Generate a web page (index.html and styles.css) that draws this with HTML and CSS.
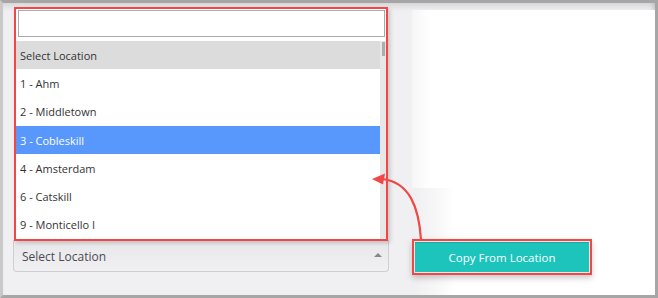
FILE: index.html
```html
<!DOCTYPE html>
<html lang="en">
<head>
    <meta charset="UTF-8">
    <meta name="viewport" content="width=device-width, initial-scale=1.0">
    <title>Copy From Location</title>
    <link rel="stylesheet" href="styles.css">
</head>
<body>
    <div class="frame">
        <div class="left-col">
            <div class="dropdown">
                <input type="text" class="search" aria-label="Search location">
                <div class="list-wrap">
                    <ul class="options">
                        <li class="option placeholder">Select Location</li>
                        <li class="option">1 - Ahm</li>
                        <li class="option">2 - Middletown</li>
                        <li class="option active">3 - Cobleskill</li>
                        <li class="option">4 - Amsterdam</li>
                        <li class="option">6 - Catskill</li>
                        <li class="option">9 - Monticello I</li>
                    </ul>
                    <div class="scrollbar"><div class="thumb"></div></div>
                </div>
            </div>
            <div class="select-box">
                <span>Select Location</span>
                <span class="caret"></span>
            </div>
        </div>

        <div class="right-col">
            <div class="panel"></div>
            <div class="lower">
                <div class="highlight">
                    <button type="button" class="copy-btn">Copy From Location</button>
                </div>
            </div>
        </div>

        <!-- annotation arrow -->
        <svg class="arrow" width="658" height="298" viewBox="0 0 658 298">
            <path d="M421 240 C419 208 410 182 382 179" fill="none" stroke="#f24747" stroke-width="2.2"/>
            <polygon points="372,179 385,173.5 383,184.5" fill="#f24747"/>
        </svg>
    </div>
</body>
</html>
```

FILE: styles.css
```css
        body {
            margin: 0;
            padding: 0;
            font-family: "Open Sans", Arial, sans-serif;
            background-color: #fff;
        }
        .frame {
            position: relative;
            width: 658px;
            height: 298px;
            box-sizing: border-box;
            border: 3px solid #a6a6a6;
            border-left-color: #c9c9c9;
            padding: 4px 0 0 10px;
            display: flex;
            background-color: #f0f0f2;
            box-shadow: inset 0 7px 6px -4px rgba(0, 0, 0, 0.12), inset -6px 0 5px -4px rgba(0, 0, 0, 0.14);
        }
        .left-col {
            width: 376px;
            display: flex;
            flex-direction: column;
        }
        .dropdown {
            position: relative;
            z-index: 2;
            margin: 0 1px;
            height: 234px;
            box-sizing: border-box;
            border: 2px solid #f24747;
            background-color: #fff;
            padding: 1px 1px 0 2px;
            box-shadow: 2px 2px 4px rgba(0, 0, 0, 0.18);
        }
        .search {
            display: block;
            width: 100%;
            height: 27px;
            box-sizing: border-box;
            border: 1px solid #aaa;
            margin: 0;
            padding: 0 4px;
            outline: none;
        }
        .list-wrap {
            display: flex;
            margin: 4px -1px 0 -2px;
            height: 198px;
            overflow: hidden;
        }
        .options {
            flex: 1;
            list-style: none;
            margin: 0;
            padding: 0;
        }
        .option {
            height: 28.3px;
            display: flex;
            align-items: center;
            padding-left: 4px;
            font-size: 11px;
            color: #333;
        }
        .option.placeholder {
            background-color: #dcdcdc;
        }
        .option.active {
            background-color: #5897fb;
            color: #fff;
        }
        .scrollbar {
            width: 6px;
            background-color: #e7e7e7;
            padding: 1px 1px 0 2px;
            box-sizing: border-box;
        }
        .thumb {
            height: 14px;
            background-color: #adadad;
        }
        .select-box {
            height: 32px;
            box-sizing: border-box;
            margin-top: -1px;
            border: 1px solid #cfcfd2;
            border-top: none;
            border-radius: 0 0 4px 4px;
            background: linear-gradient(#e8e8eb, #f0f0f2);
            display: flex;
            align-items: center;
            justify-content: space-between;
            padding: 1px 6px 0 8px;
            font-size: 12px;
            color: #4a4a55;
        }
        .caret {
            width: 0;
            height: 0;
            border-left: 4px solid transparent;
            border-right: 4px solid transparent;
            border-bottom: 4px solid #888;
            margin-bottom: 2px;
        }
        .right-col {
            flex: 1;
            margin-left: 23px;
            margin-top: 3px;
            display: flex;
            flex-direction: column;
        }
        .panel {
            height: 178px;
            background: linear-gradient(to right, #f6f6f7, #fff 18px);
        }
        .lower {
            flex: 1;
            background: linear-gradient(to right, #efeff1 0, #f7f7f8 25px, #fff 42px);
        }
        .highlight {
            width: 180px;
            height: 36px;
            box-sizing: border-box;
            margin-top: 51px;
            border: 2px solid #f24747;
            padding: 1px;
            background-color: #e6e6e6;
            box-shadow: 0 3px 6px rgba(0, 0, 0, 0.22);
        }
        .copy-btn {
            display: block;
            width: 100%;
            height: 100%;
            border: none;
            border-top: 1px solid #17aaa2;
            margin: 0;
            padding: 0;
            background-color: #1cc4bb;
            color: #fff;
            font-family: "Open Sans", Arial, sans-serif;
            font-size: 11.5px;
        }
        .arrow {
            position: absolute;
            left: -3px;
            top: -3px;
            z-index: 3;
            pointer-events: none;
        }
```
